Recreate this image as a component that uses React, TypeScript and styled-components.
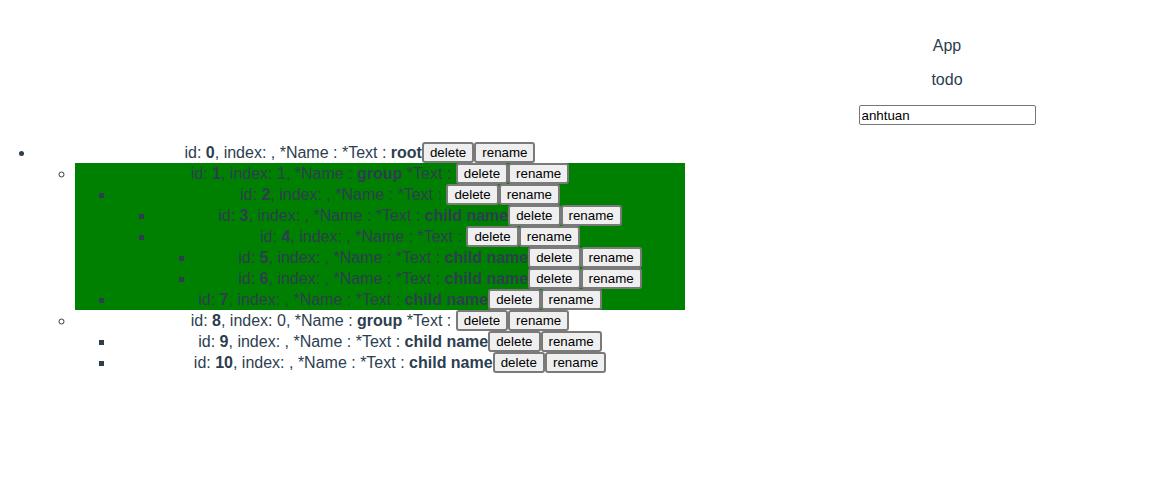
import React from "react";
import styled, { createGlobalStyle } from "styled-components";

type Node = {
  id: number;
  index?: number;
  name?: string;
  text?: string;
  active?: boolean;
  children?: Node[];
};

const tree: Node = {
  id: 0,
  text: "root",
  children: [
    {
      id: 1,
      index: 1,
      name: "group",
      active: true,
      children: [
        {
          id: 2,
          children: [
            { id: 3, text: "child name" },
            {
              id: 4,
              children: [
                { id: 5, text: "child name" },
                { id: 6, text: "child name" },
              ],
            },
          ],
        },
        { id: 7, text: "child name" },
      ],
    },
    {
      id: 8,
      index: 0,
      name: "group",
      children: [
        { id: 9, text: "child name" },
        { id: 10, text: "child name" },
      ],
    },
  ],
};

const GlobalStyle = createGlobalStyle`
  body {
    margin: 0;
    background: #ffffff;
  }
`;

const Page = styled.div`
  font-family: "Liberation Sans", Arial, sans-serif;
  font-size: 16px;
  color: #2c3e50;
  text-align: center;
  padding-top: 37px;
`;

const Header = styled.div`
  display: flex;
  flex-direction: column;
  align-items: center;
  width: 440px;
  margin-left: auto;
  gap: 16px;
`;

const Title = styled.div`
  line-height: 18px;
`;

const NameInput = styled.input`
  box-sizing: border-box;
  width: 177px;
  height: 20px;
  padding: 1px 2px;
  border: 1px solid #767676;
  border-radius: 2px;
  font-family: "Liberation Sans", Arial, sans-serif;
  font-size: 13.33px;
  color: #000000;
`;

const Tree = styled.div`
  width: 685px;
  margin-top: 17px;
`;

const List = styled.ul<{ $root?: boolean }>`
  margin: 0;
  padding-left: ${(p) => (p.$root ? "35px" : "40px")};
`;

const Item = styled.li<{ $marker: string; $active?: boolean }>`
  list-style-type: ${(p) => p.$marker};
  background: ${(p) => (p.$active ? "#008000" : "transparent")};
  line-height: 21px;
`;

const Button = styled.button`
  box-sizing: border-box;
  height: 21px;
  font-family: "Liberation Sans", Arial, sans-serif;
  font-size: 13.33px;
  color: #000000;
  background: #efefef;
  border: 2px solid #7a7a7a;
  border-radius: 3px;
  padding: 0 6px;
  margin: 0;
  line-height: 15px;
  vertical-align: top;
`;

const markers = ["disc", "circle", "square"];

function TreeItem({ node, depth }: { node: Node; depth: number }) {
  return (
    <Item $marker={markers[Math.min(depth, 2)]} $active={node.active}>
      id: <b>{node.id}</b>, index: {node.index ?? ""}, *Name : <b>{node.name ?? ""}</b> *Text :{" "}
      <b>{node.text ?? ""}</b>
      <Button>delete</Button>
      <Button>rename</Button>
      {node.children && (
        <List>
          {node.children.map((c) => (
            <TreeItem key={c.id} node={c} depth={depth + 1} />
          ))}
        </List>
      )}
    </Item>
  );
}

export default function App() {
  return (
    <Page>
      <GlobalStyle />
      <Header>
        <Title>App</Title>
        <Title>todo</Title>
        <NameInput defaultValue="anhtuan" />
      </Header>
      <Tree>
        <List $root>
          <TreeItem node={tree} depth={0} />
        </List>
      </Tree>
    </Page>
  );
}
